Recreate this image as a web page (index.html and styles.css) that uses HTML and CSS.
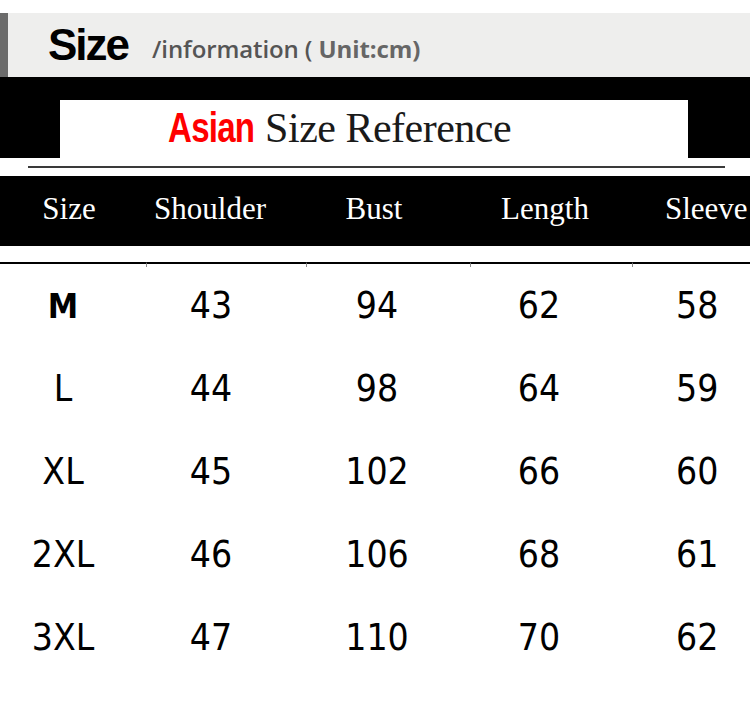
FILE: index.html
```html
<!DOCTYPE html>
<html>
<head>
<meta charset="utf-8">
<link rel="stylesheet" href="styles.css">
</head>
<body>
<div class="page">
  <div class="top-gap"></div>
  <div class="info-bar">
    <span class="info-title">Size</span>
    <span class="info-sub">/information (&nbsp;<b>Unit:cm)</b></span>
  </div>
  <div class="band">
    <div class="title-box">
      <span class="asian">Asian</span>
      <span class="ref">Size Reference</span>
    </div>
  </div>
  <div class="rule-wrap"><div class="rule"></div></div>
  <div class="thead">
    <div class="th c1">Size</div>
    <div class="th c2">Shoulder</div>
    <div class="th c3">Bust</div>
    <div class="th c4">Length</div>
    <div class="th c5">Sleeve</div>
  </div>
  <div class="ticks">
    <div class="tick"></div><div class="tick t"></div><div class="tick t"></div><div class="tick t"></div><div class="tick t"></div>
  </div>
  <div class="rows">
    <div class="row"><div class="sz">M</div><div>43</div><div>94</div><div>62</div><div>58</div></div>
    <div class="row"><div>L</div><div>44</div><div>98</div><div>64</div><div>59</div></div>
    <div class="row"><div>XL</div><div>45</div><div>102</div><div>66</div><div>60</div></div>
    <div class="row"><div>2XL</div><div>46</div><div>106</div><div>68</div><div>61</div></div>
    <div class="row"><div>3XL</div><div>47</div><div>110</div><div>70</div><div>62</div></div>
  </div>
</div>
</body>
</html>
```
FILE: styles.css
```css
html, body {
  margin: 0;
  padding: 0;
  background: #ffffff;
}
.page {
  width: 750px;
  height: 707px;
  overflow: hidden;
  background: #ffffff;
}
.top-gap {
  height: 13px;
}
.info-bar {
  height: 64px;
  box-sizing: border-box;
  background: #eeeeed;
  border-left: 8px solid #6b6b6b;
  padding-left: 40px;
  display: flex;
  align-items: baseline;
  padding-top: 10px;
}
.info-title {
  font-family: "Liberation Sans", Arial, sans-serif;
  font-weight: bold;
  font-size: 44px;
  letter-spacing: -2px;
  color: #000;
  line-height: 44px;
}
.info-sub {
  margin-left: 24px;
  font-family: "Open Sans", sans-serif;
  font-weight: 600;
  font-size: 24px;
  color: #555;
  letter-spacing: -0.1px;
  position: relative;
  top: -2px;
}
.info-sub b {
  font-weight: 700;
  color: #666;
}
.band {
  height: 81px;
  box-sizing: border-box;
  background: #000;
  padding: 23px 62px 0 60px;
}
.title-box {
  height: 58px;
  background: #fff;
  display: flex;
  align-items: baseline;
  padding-left: 108px;
  box-sizing: border-box;
  padding-top: 5px;
}
.asian {
  display: inline-block;
  font-family: "Liberation Sans", Arial, sans-serif;
  font-weight: bold;
  font-size: 43px;
  line-height: 44px;
  color: #ff0000;
  letter-spacing: -1px;
  transform: scaleX(0.77);
  transform-origin: left center;
  margin-right: -15px;
}
.ref {
  font-family: "Liberation Serif", "Times New Roman", serif;
  font-size: 42px;
  line-height: 44px;
  color: #1a1a1a;
  letter-spacing: -0.5px;
}
.rule-wrap {
  height: 18px;
  box-sizing: border-box;
  padding: 8px 25px 0 28px;
}
.rule {
  height: 2px;
  background: #3a3a3a;
}
.thead {
  height: 70px;
  background: #000;
  display: grid;
  grid-template-columns: 138px 144px 184px 158px 1fr;
  align-items: center;
  font-family: "Liberation Serif", "Times New Roman", serif;
  font-size: 31px;
  color: #fff;
  white-space: nowrap;
}
.th {
  text-align: center;
  padding-bottom: 4px;
}
.th.c5 {
  text-align: left;
  padding-left: 41px;
}
.ticks {
  margin-top: 16px;
  display: grid;
  grid-template-columns: 146px 160px 164px 162px 1fr;
}
.tick {
  height: 3px;
  border-top: 2px solid #000;
}
.tick.t {
  border-left: 1px solid #8a8a8a;
}
.rows {
  font-family: "DejaVu Sans", sans-serif;
  font-stretch: condensed;
  font-size: 37px;
  color: #000;
}
.row {
  height: 83px;
  display: grid;
  grid-template-columns: 126px 170px 162px 162px 1fr;
  align-items: center;
  text-align: center;
}
.row > div:last-child {
  text-align: left;
  padding-left: 56px;
}
.row > .sz {
  font-weight: 600;
  font-size: 34px;
}
.row:first-child {
  margin-top: -3px;
}
```
